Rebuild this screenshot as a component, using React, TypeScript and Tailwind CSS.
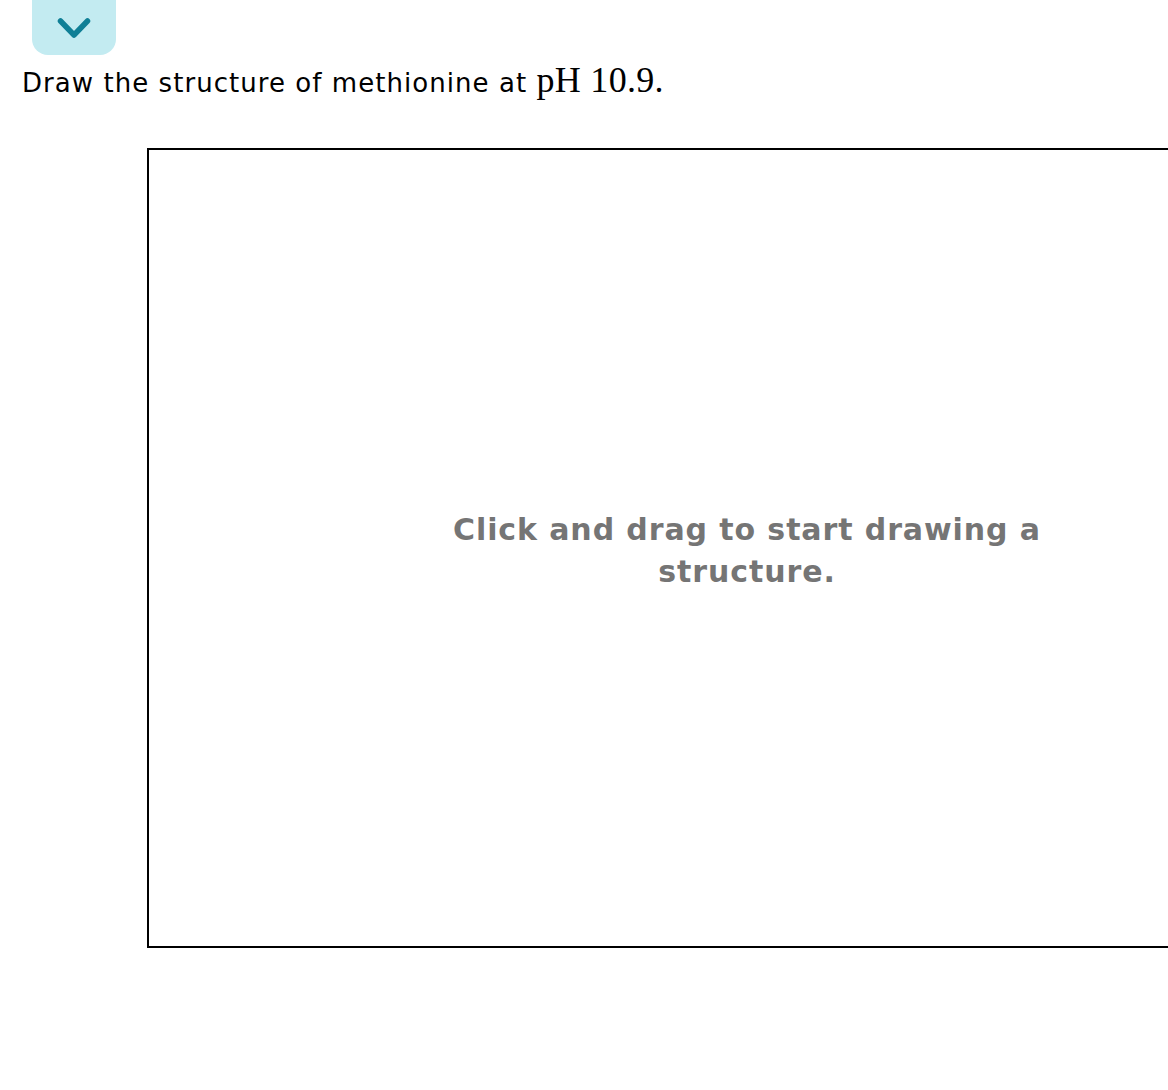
import React from "react";

export default function App() {
  return (
    <div className="w-[1168px] h-[1090px] overflow-hidden bg-white" style={{ fontFamily: '"DejaVu Sans", Verdana, sans-serif' }}>
      <div className="pl-[32px]">
        <button className="w-[84px] h-[55px] bg-[#c3ebf1] rounded-b-[16px] flex items-center justify-center">
          <svg width="36" height="24" viewBox="0 0 36 24">
            <path d="M4.5 5 L18 19 L31.5 5" fill="none" stroke="#0f7f96" strokeWidth="5.5" strokeLinecap="round" strokeLinejoin="round" />
          </svg>
        </button>
      </div>
      <p className="pl-[22px] mt-[7px] text-[26px] leading-[36px] tracking-[1.05px] text-black whitespace-nowrap">
        Draw the structure of methionine at{" "}
        <span className="text-[36px] leading-none tracking-[0.3px]" style={{ fontFamily: '"Liberation Serif", "Times New Roman", serif' }}>pH 10.9.</span>
      </p>
      <div className="ml-[147px] mt-[47px] w-[1200px] h-[800px] border-2 border-black flex items-center justify-center">
        <p className="w-[640px] pt-[6px] text-center text-[30px] leading-[42px] tracking-[0.9px] font-bold text-[#757575]">
          Click and drag to start drawing a structure.
        </p>
      </div>
    </div>
  );
}
